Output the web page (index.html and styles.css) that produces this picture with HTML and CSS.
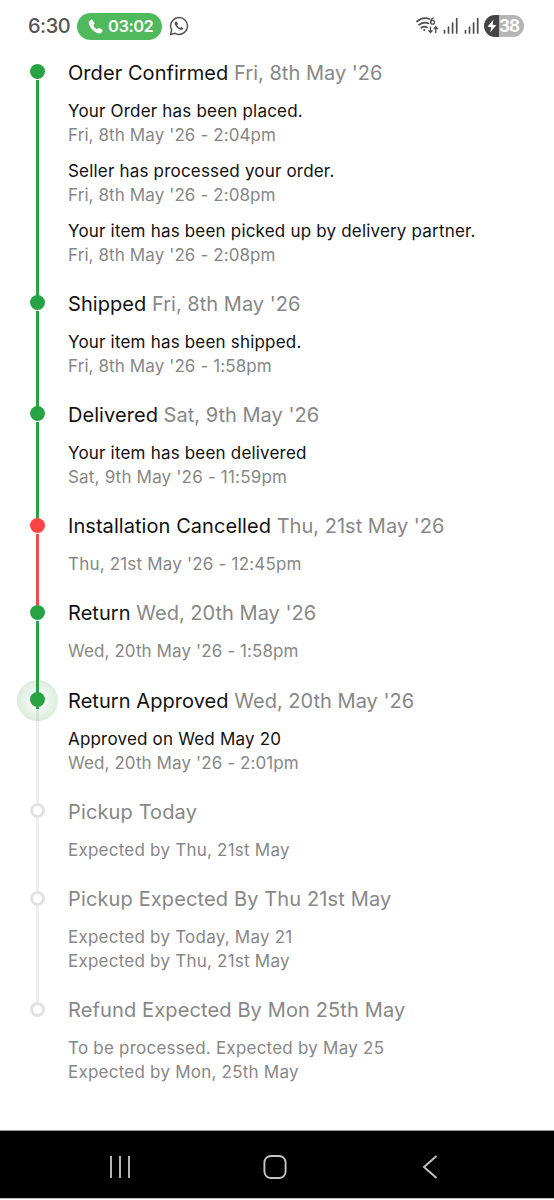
FILE: index.html
```html
<!DOCTYPE html>
<html lang="en">
<head>
<meta charset="utf-8">
<title>Order status</title>
<link rel="stylesheet" href="styles.css">
</head>
<body>
<div class="screen">
  <header class="status">
    <span class="clock">6:30</span>
    <span class="call">
      <svg class="call-icon" width="15" height="15" viewBox="0 0 15 15"><path d="M3.1.7 1.200 2.200C.4 3 .6 5 2 7.500 3.500 10.200 5.900 12.500 8.700 13.700 10.900 14.700 12.600 14.600 13.400 13.500L14.500 12C14.800 11.500 14.700 11.100 14.300 10.800L11.700 9C11.200 8.700 10.800 8.800 10.400 9.200L9.200 10.300C7.500 9.400 6.100 8 5.200 6.200L6.300 5C6.600 4.700 6.600 4.300 6.400 3.900L4.500 1C4.200.5 3.700.4 3.100.7Z" fill="#fff"/></svg>
      <span class="call-time">03:02</span>
    </span>
    <svg class="whatsapp" width="20" height="20" viewBox="0 0 20 20" fill="none"><path d="M1.500 18.500 2.700 14A8.400 8.400 0 1 1 6 17.300Z" stroke="#555" stroke-width="1.500" stroke-linejoin="round"/><path d="M6.700 5.500C5.500 6.200 5.400 7.700 6.300 9.300 7.400 11.300 9.100 12.900 11.200 13.700 12.700 14.200 14.100 13.600 14.400 12.200L12.300 11 11.200 12C9.900 11.400 8.800 10.300 8.200 9L9 7.900 8.100 5.700Z" fill="#555"/></svg>
    <span class="spacer"></span>
    <svg class="radios" width="65" height="20" viewBox="0 0 65 20" fill="none" stroke="#4d4d4d">
      <path d="M1 5.500Q6.500.6 13.500 3M3 8.800Q7.500 5.200 12.500 7.300M5.300 11.800Q8.200 9.800 11 11.500" stroke-width="1.700" stroke-linecap="round"/>
      <circle cx="8.300" cy="14" r="1.100" fill="#4d4d4d" stroke="none"/>
      <path d="M17.800 1.800Q14.500 2.800 14.700 6.300" stroke-width="1.300"/><circle cx="16.600" cy="6.200" r="1.900" stroke-width="1.300"/>
      <path d="M14.500 10.500V16M12.500 14.300 14.500 16.500 16.500 14.300M19.800 17V11.200M17.800 13 19.800 10.800 21.800 13" stroke-width="1.300"/>
      <path d="M28.500 14.500V17M32.500 11.200V17M36.600 7V17M40.700 2.700V17M49.500 14.500V17M53.500 11.200V17M57.600 7V17M61.700 2.700V17" stroke-width="1.700" stroke-linecap="round"/>
    </svg>
    <span class="battery">
      <svg class="bolt" width="10" height="14" viewBox="0 0 10 14"><path d="M6.500.5.500 7.800 4.400 8.300 3 13.500 9.300 6.200 5.600 5.700Z" fill="#fff"/></svg>
      <span class="level">38</span>
    </span>
  </header>

  <main class="timeline">
    <section class="step done">
      <div class="rail"><i class="dot"></i></div>
      <div class="body">
        <h2><b>Order Confirmed</b> Fri, 8th May '26</h2>
        <div class="event"><p class="note">Your Order has been placed.</p><p class="tight">Fri, 8th May '26 - 2:04pm</p></div>
        <div class="event"><p class="note">Seller has processed your order.</p><p class="tight">Fri, 8th May '26 - 2:08pm</p></div>
        <div class="event"><p class="note">Your item has been picked up by delivery partner.</p><p class="tight">Fri, 8th May '26 - 2:08pm</p></div>
      </div>
    </section>
    <section class="step done">
      <div class="rail"><i class="dot"></i></div>
      <div class="body">
        <h2><b>Shipped</b> Fri, 8th May '26</h2>
        <div class="event"><p class="note">Your item has been shipped.</p><p class="tight">Fri, 8th May '26 - 1:58pm</p></div>
      </div>
    </section>
    <section class="step done">
      <div class="rail"><i class="dot"></i></div>
      <div class="body">
        <h2><b>Delivered</b> Sat, 9th May '26</h2>
        <div class="event"><p class="note">Your item has been delivered</p><p>Sat, 9th May '26 - 11:59pm</p></div>
      </div>
    </section>
    <section class="step cancelled">
      <div class="rail"><i class="dot"></i></div>
      <div class="body">
        <h2><b>Installation Cancelled</b> Thu, 21st May '26</h2>
        <div class="event"><p>Thu, 21st May '26 - 12:45pm</p></div>
      </div>
    </section>
    <section class="step done">
      <div class="rail"><i class="dot"></i></div>
      <div class="body">
        <h2><b>Return</b> Wed, 20th May '26</h2>
        <div class="event"><p class="tight">Wed, 20th May '26 - 1:58pm</p></div>
      </div>
    </section>
    <section class="step current">
      <div class="rail"><i class="dot"></i></div>
      <div class="body">
        <h2><b>Return Approved</b> Wed, 20th May '26</h2>
        <div class="event"><p class="note">Approved on Wed May 20</p><p class="tight">Wed, 20th May '26 - 2:01pm</p></div>
      </div>
    </section>
    <section class="step pending">
      <div class="rail"><i class="dot"></i></div>
      <div class="body">
        <h2>Pickup Today</h2>
        <div class="event"><p>Expected by Thu, 21st May</p></div>
      </div>
    </section>
    <section class="step pending">
      <div class="rail"><i class="dot"></i></div>
      <div class="body">
        <h2>Pickup Expected By Thu 21st May</h2>
        <div class="event"><p>Expected by Today, May 21</p><p>Expected by Thu, 21st May</p></div>
      </div>
    </section>
    <section class="step pending last">
      <div class="rail"><i class="dot"></i></div>
      <div class="body">
        <h2>Refund Expected By Mon 25th May</h2>
        <div class="event"><p>To be processed. Expected by May 25</p><p>Expected by Mon, 25th May</p></div>
      </div>
    </section>
  </main>

  <nav class="navbar">
    <svg width="24" height="26" viewBox="0 0 24 26"><path d="M3 2V24M12 2V24M21 2V24" stroke="#b4b4b4" stroke-width="2"/></svg>
    <svg width="24" height="26" viewBox="0 0 24 26"><rect x="1.400" y="2" width="21.200" height="22" rx="6.500" fill="none" stroke="#c4c4c4" stroke-width="1.900"/></svg>
    <svg width="24" height="26" viewBox="0 0 24 26"><path d="M18.500 2 6 13 18.500 24" fill="none" stroke="#c4c4c4" stroke-width="1.900"/></svg>
  </nav>
</div>
</body>
</html>
```
FILE: styles.css
```css
* { box-sizing: border-box; margin: 0; padding: 0; }
body { background: #fff; font-family: Inter, "Liberation Sans", sans-serif; }
.screen { width: 554px; height: 1199px; display: flex; flex-direction: column; overflow: hidden; }

.status { height: 52px; flex: none; display: flex; align-items: center; padding: 0 30px 0 28px; }
.clock { width: 49px; font-size: 20px; font-weight: 500; letter-spacing: -0.500px; color: #555; white-space: nowrap; }
.call { width: 85px; height: 27px; border-radius: 14px; background: #50b95c; display: flex; align-items: center; padding-left: 11px; gap: 5px; }
.call-time { color: #fff; font-size: 16.500px; font-weight: 600; letter-spacing: -0.500px; }
.whatsapp { margin-left: 7px; }
.spacer { flex: 1; }
.radios { margin-right: 3px; }
.battery { width: 40px; height: 22px; border-radius: 11px; background: linear-gradient(90deg, #444 15px, #b5b5b5 15px); display: flex; align-items: center; padding-left: 3px; gap: 2px; }
.level { color: #fff; font-size: 17px; font-weight: 700; letter-spacing: -0.900px; }

.timeline { flex: 1; padding: 6.500px 0 0 17px; }
.step { display: flex; gap: 10px; }
.rail { width: 41px; flex: none; display: flex; flex-direction: column; align-items: center; }
.rail::after { content: ""; width: 3px; flex: 1; margin: 1px 0 -6px; background: #27a343; }
.dot { width: 15px; height: 15px; flex: none; margin-top: 5.500px; border-radius: 50%; background: #27a343; position: relative; z-index: 1; }
.body { padding-bottom: 23.220px; }
h2 { font-size: 20px; line-height: 28px; font-weight: 400; letter-spacing: 0.020px; color: #878787; white-space: nowrap; }
h2 b { font-weight: 400; letter-spacing: 0.060px; color: #111; }
.event { margin-top: 12px; }
.event p { font-size: 17px; line-height: 24px; letter-spacing: 0.190px; color: #878787; white-space: nowrap; }
.event .tight { letter-spacing: 0.100px; }
.event .note { color: #111; }
.cancelled .dot { background: #fb4444; }
.cancelled .rail::after { background: #ef4b4d; }
.current .dot { z-index: auto; }
.current .dot::before { content: ""; position: absolute; z-index: -1; left: -13px; top: -12px; width: 41px; height: 41px; border-radius: 50%; background: radial-gradient(closest-side, #f6faf6 30%, #dcecdd 100%); }
.current .rail::after { margin-top: 0; background: linear-gradient(#27a343 2px, rgba(0, 0, 0, 0.065) 2px); }
.pending .rail::after { margin-top: 0; background: #efefef; }
.pending h2 { letter-spacing: 0.130px; }
.pending .event p { letter-spacing: 0.230px; }
.pending .dot { background: #fff; border: 3px solid #e2e2e2; }
.last .rail::after { display: none; }

.navbar { height: 69px; flex: none; background: #000; display: flex; align-items: center; gap: 131px; padding: 5px 0 0 108px; border-top: 1px solid #999; border-bottom: 1px solid #bbb; }
```
